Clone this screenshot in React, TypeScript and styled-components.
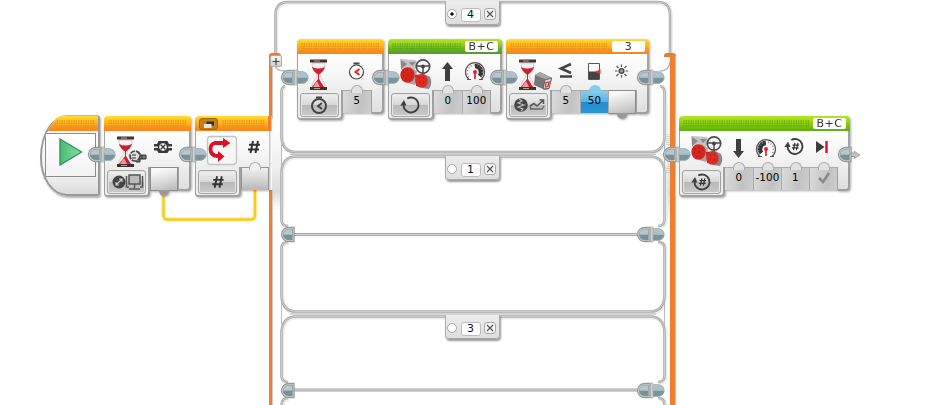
import React from "react";
import styled, { createGlobalStyle, css } from "styled-components";

const GlobalStyle = createGlobalStyle`
  * { box-sizing: border-box; }
  body { margin: 0; background: #fff; overflow: hidden; font-family: "DejaVu Sans", Verdana, sans-serif; }
  svg { display: block; overflow: visible; }
`;

type Tone = "orange" | "green" | "lime";
const tones: Record<Tone, string> = {
  orange: "linear-gradient(#ffdf3c 0, #ffc91f 20%, #fdac20 55%, #fa8f22 75%, #f98718)",
  green: "linear-gradient(#b4e42a 0, #9ad41c 30%, #6cb31c 65%, #4c9c34)",
  lime: "linear-gradient(#b4e42a 0, #a4d812 30%, #7cc40c 65%, #5cae14)",
};

const Canvas = styled.main`
  position: relative;
  width: 951px;
  height: 405px;
  overflow: hidden;
  background: #fff;
`;
const Place = styled.div<{ $x: number; $y: number }>`
  position: absolute;
  left: ${(p) => p.$x}px;
  top: ${(p) => p.$y}px;
`;
const Sequence = styled.div`
  display: flex;
  align-items: flex-start;
  gap: 4px;
`;
const Wires = styled.svg`
  position: absolute;
  inset: 0;
`;
const BlockWrap = styled.div`
  position: relative;
`;
const PortOverlay = styled.div`
  position: absolute;
  left: -17px;
  top: 31px;
`;
const BlockBox = styled.section<{ $w: number }>`
  width: ${(p) => p.$w}px;
  display: flex;
  flex-direction: column;
  filter: drop-shadow(1px 1px 1px rgba(0, 0, 0, 0.32));
`;
const Header = styled.header<{ $tone: Tone; $flush?: boolean }>`
  height: 15px;
  padding: 2px 4px 0;
  display: flex;
  align-items: flex-start;
  gap: 4px;
  border-radius: 4px ${(p) => (p.$flush ? 0 : 4)}px 0 0;
  background: ${(p) => tones[p.$tone]};
`;
const Grip = styled.div<{ $tone: Tone }>`
  flex: 1;
  height: 7px;
  margin-top: 2px;
  background: radial-gradient(circle at 1px 1px, ${(p) => (p.$tone === "orange" ? "#d98a0c" : "#4f9d16")} 0.6px, transparent 0.9px) 0 0 / 2.4px 2.4px;
  opacity: 0.75;
`;
const PortField = styled.div`
  width: 33px;
  height: 11px;
  margin-right: 0;
  border-radius: 2px;
  background: #fff;
  color: #333;
  font-size: 11px;
  line-height: 11px;
  letter-spacing: 0.6px;
  text-align: center;
`;
const FolderBadge = styled.div`
  width: 19px;
  height: 12px;
  padding: 2px 3px;
  border-radius: 3px;
  border: 1px solid #a4640a;
  background: #c1811c;
`;
const IconRow = styled.div<{ $flush?: boolean }>`
  height: 36px;
  display: flex;
  border: solid #a4a4a4;
  border-width: 0 ${(p) => (p.$flush ? 0 : 2)}px 0 1px;
  background: linear-gradient(#fff, #f6f6f6 60%, #ededed);
  & > svg:first-child { margin-left: -1px; }
  & > svg { flex: none; }
`;
const BottomRow = styled.div`
  display: flex;
  align-items: flex-start;
  height: 29px;
`;
const Foot = styled.div`
  flex: none;
  width: 46px;
  height: 30px;
  padding: 3px 3px 2px 2px;
  border: solid #a0a0a0;
  border-width: 0 2px 2px 1px;
  border-radius: 0 0 4px 4px;
  background: #ededed;
`;
const ModeButton = styled.button`
  display: flex;
  align-items: center;
  justify-content: center;
  width: 39px;
  height: 24px;
  padding: 0;
  border: 1px solid #a2a2a2;
  border-radius: 3px;
  background: linear-gradient(#f0f0f0, #d8d8d8 48%, #b9b9b9 52%, #cacaca);
  box-shadow: inset 0 0 0 1px #e8e8e8;
`;
const Cell = styled.div<{ $kind?: "blue" | "out" | "in" }>`
  flex: none;
  position: relative;
  width: 28px;
  height: 23px;
  display: flex;
  justify-content: center;
  border-top: 1px solid #aaa;
  font-size: 10.3px;
  line-height: 19px;
  letter-spacing: 0.2px;
  color: #000;
  background: linear-gradient(100deg, #dcdcdc, #c2c2c2 65%, #cfcfcf);
  & + & { border-left: 1px solid #aaa; }
  &::before {
    content: "";
    position: absolute;
    left: 8px;
    top: -6px;
    width: 10px;
    height: 7px;
    border: 1px solid #aaa;
    border-bottom: 0;
    border-radius: 6px 6px 0 0;
    background: #e2e2e2;
  }
  ${(p) => p.$kind === "blue" && css`
    background: linear-gradient(#85cdee, #55b4e4 48%, #238bcb 52%, #2c95d3);
    &::before { background: #83ccee; border-color: #83ccee; }
  `}
  ${(p) => p.$kind === "out" && css`
    height: 24px;
    border: 1px solid #8c8c8c;
    background: linear-gradient(165deg, #f8f8f8 15%, #dcdcdc 55%, #b8b8b8);
    &::before {
      top: 22px;
      left: 8px;
      height: 6px;
      border: 0;
      border-radius: 0 0 5px 5px;
      background: #999;
    }
  `}
  ${(p) => p.$kind === "in" && css`
    border: solid #959595;
    border-width: 1px 1px 0;
    background: linear-gradient(#f0f0f0, #d6d6d6 50%, #b7b7b7);
    &::before { background: #f0f0f0; left: 7px; }
  `}
`;
const Tail = styled.div`
  flex: 1;
  height: 24px;
  border: solid #9f9f9f;
  border-width: 0 2px 2px 1px;
  border-radius: 0 0 4px 2px;
  background: linear-gradient(#ededed, #dedede);
`;
const StartBox = styled.section`
  width: 60px;
  height: 81px;
  margin-top: -1px;
  display: flex;
  flex-direction: column;
  overflow: hidden;
  border: solid #999;
  border-width: 1px 2px 2px;
  border-top-color: #f7b42c;
  border-radius: 27px 3px 3px 27px / 42px 3px 3px 38px;
  background: linear-gradient(#fff, #f4f4f4 70%, #dcdcdc);
  box-shadow: 1px 2px 2px rgba(0, 0, 0, 0.3);
  ${Header} { padding: 2px 3px 0 12px; border-radius: 0; }
`;
const StartFace = styled.div`
  width: 51px;
  height: 44px;
  margin: 2px 2px 0 3px;
  border: 1px solid #8b8b8b;
  background: linear-gradient(#fff, #f2f2f2);
`;
const Tab = styled.div`
  width: 55px;
  height: 24px;
  padding: 0 3px 0 2px;
  display: flex;
  align-items: center;
  justify-content: space-between;
  border: solid #aaa;
  border-width: 0 1px 1px;
  border-radius: 0 0 4px 4px;
  background: linear-gradient(#ececec, #dedede);
  box-shadow: 1px 2px 2px rgba(0, 0, 0, 0.4);
`;
const CaseValue = styled.div`
  width: 20px;
  height: 14px;
  margin-top: 4px;
  border: 1px solid #bbb;
  border-radius: 3px;
  background: #fff;
  color: #111;
  font-size: 11px;
  line-height: 12px;
  text-align: center;
`;
const Radio = styled.div<{ $on?: boolean }>`
  width: 10px;
  height: 10px;
  margin-top: 3px;
  margin-left: -1px;
  border: 1px solid #aaa;
  border-radius: 50%;
  background: ${(p) => (p.$on ? "radial-gradient(circle, #111 1.3px, #fff 2px)" : "#fff")};
`;
const CloseButton = styled.button`
  width: 12px;
  height: 12px;
  margin-top: 3px;
  padding: 2px;
  border: 1px solid #aaa;
  border-radius: 3px;
  background: #f4f4f4;
`;
const Expander = styled.button`
  display: block;
  width: 12px;
  height: 12px;
  padding: 1px;
  border: 1px solid #aaa;
  border-radius: 2px;
  background: linear-gradient(#f8f8f8, #cfcfcf);
`;
const Rail = styled.div<{ $w: number; $h: number }>`
  width: ${(p) => p.$w}px;
  height: ${(p) => p.$h}px;
  background: #ee7f30;
  box-shadow: 1px 0 1px #c6c6c6;
`;
const RailCap = styled.div`
  width: 12px;
  height: 4px;
  border-radius: 3px 3px 0 0;
  background: #ec7a2c;
`;
const Shade = styled.div<{ $w: number; $h: number }>`
  width: ${(p) => p.$w}px;
  height: ${(p) => p.$h}px;
  background: linear-gradient(#fcfcfc, #efefef 45%, #dcdcdc 75%, #fff);
`;

const Plug = () => (
  <>
    <path d="M14 0.5H9A7.5 7 0 0 0 9 14.5H14Z" fill="#f2f2f2" stroke="#999" strokeWidth="1.4" />
    <path d="M12 2H9A6 5.5 0 0 0 3 7.5H12Z" fill="#b7c7ce" />
    <path d="M3 7.5A6 5.5 0 0 0 9 13H12V7.5Z" fill="#75929a" />
    <path d="M12.5 2H9A6 5.5 0 0 0 9 13H12.5Z" fill="none" stroke="#84969d" strokeWidth="0.8" />
  </>
);
const Socket = () => (
  <>
    <path d="M15 0H17V15H15Z" fill="#e8e8e8" stroke="#aaa" strokeWidth=".8" />
    <path d="M17 1.5H21.5A6.5 6 0 0 1 28.5 7.5H17Z" fill="#afc1c8" />
    <path d="M28.5 7.5A6.5 6 0 0 1 21.5 13.5H17V7.5Z" fill="#78949c" />
    <path d="M17 1.5H21.5A6.5 6 0 0 1 21.5 13.5H17Z" fill="none" stroke="#9fafb5" strokeWidth="0.8" />
  </>
);
const Port = ({ single, stub }: { single?: boolean; stub?: boolean }) => (
  <svg width="30" height="15">
    {stub && <path d="M13 6H18L17 4L23 8L17 11.500L18 9.500H13Z" fill="#c4c4c4" stroke="#a4a4a4" />}
    <Plug />
    {!single && <Socket />}
  </svg>
);

const Main = ({ children }: { children: React.ReactNode }) => <svg width="45" height="36">{children}</svg>;
const Slot = ({ children }: { children: React.ReactNode }) => <svg width="28" height="36">{children}</svg>;

const Hourglass = () => (
  <g>
    <path d="M15 9C15 17 20 18 20 21C20 24 15 27 15 33H28C28 27 23 24 23 21C23 18 28 17 28 9Z" fill="#f3f1f1" stroke="#c9c2c2" strokeWidth=".8" />
    <path d="M15 13Q21 16 28 13Q27 17 22 20.5V25L27 33H15L21 25V20.5Q16 17 15 13Z" fill="#cf1f2c" />
    <path d="M16 33L20 27L23 33Z" fill="#ef9a9e" />
    <rect x="13" y="5.5" width="17" height="3" fill="#45332f" />
    <rect x="13" y="33" width="17" height="3" fill="#3c3330" />
    <path d="M17 7H23M17 34.5H23" stroke="#a9a3a0" />
  </g>
);
const Motors = () => (
  <g>
    <path d="M12 5L28 6L30 13L24 17L13 16Z" fill="#c4c4c4" />
    <path d="M13 6L19 10L13 15ZM21 8L28 8L24 12Z" fill="#8a8a8a" />
    <path d="M22 13L29 17L27 31L20 29Z" fill="#a9a5a4" />
    <path d="M27 21L36 20L40 34L28 32Z" fill="#c9221d" />
    <path d="M36 20L42 23Q45 29 41 35L34 34Z" fill="#8b8786" />
    <ellipse cx="33.500" cy="27" rx="6.300" ry="6.800" fill="#dc2a24" />
    <ellipse cx="19.500" cy="21" rx="7.200" ry="7.700" fill="#d8241e" />
    <path d="M15 18h1M19 16h1M23 19h1M15 22h1M19 21h2M23 23h1M17 26h1M21 26h1M31 24h1M35 24h1M31 28h1M35 29h1" stroke="#8a1713" strokeWidth="1.1" />
    <circle cx="35" cy="12.500" r="6.700" fill="#f5f5f5" stroke="#4c4c4c" strokeWidth="1.700" />
    <path d="M28.500 12H41.500M35 12.500V19" stroke="#4c4c4c" strokeWidth="1.500" />
    <circle cx="35" cy="12.500" r="2" fill="#444" />
  </g>
);
const Stopwatch = ({ x, y, r, hand }: { x: number; y: number; r: number; hand: string }) => (
  <g fill="none" stroke="#454545">
    <circle cx={x} cy={y} r={r} fill={hand === "#444" ? "none" : "#fff"} strokeWidth={hand === "#444" ? 2 : 1.2} />
    <path d={`M${x - 3} ${y - r - 1.5}H${x + 3}`} strokeWidth="2" />
    <path d={`M${x + 3} ${y - 3}L${x - 1} ${y}L${x + 3} ${y + 3}`} stroke={hand} strokeWidth="2" />
  </g>
);
const Arrow = ({ down }: { down?: boolean }) => (
  <path transform={down ? "rotate(180 14.500 17.500)" : undefined} d="M14.500 8L20 15H17V27H12V15H9Z" fill="#3e3e3e" />
);
const Gauge = ({ left }: { left?: boolean }) => (
  <g fill="none">
    <path d="M8 25.500A9.500 9.500 0 1 1 20 25.500" fill="#fafafa" stroke="#555" strokeWidth="1.200" />
    <path d="M14 12A6 6 0 0 1 18.500 22" transform={left ? "matrix(-1 0 0 1 28 0)" : undefined} stroke="#333" strokeWidth="4.500" />
    <path d="M8 23A7.500 7.500 0 1 1 20 23" stroke="#888" strokeWidth="1.500" strokeDasharray="1 2" />
    <path d="M6 25.500H10M18 25.500H22" stroke="#555" />
    <circle cx="14" cy="18" r="2" fill="#e41e2d" />
    <path d="M14 18V25" stroke="#e41e2d" strokeWidth="1.7" />
  </g>
);
const Hash = ({ x, y, s = 1 }: { x: number; y: number; s?: number }) => (
  <path transform={`translate(${x} ${y}) scale(${s})`} d="M-1 -6L-3.500 6M4 -6L1.500 6M-5 -2.200H6M-6 2.400H5" fill="none" stroke="#333" strokeWidth="2" />
);
const Turn = ({ x, y, r = 7.5, hash }: { x: number; y: number; r?: number; hash?: boolean }) => (
  <g transform={`translate(${x} ${y})`}>
    <path d={`M${-r * 0.5} ${-r * 0.866}A${r} ${r} 0 1 1 ${-r} 0`} fill="none" stroke="#404040" strokeWidth="1.9" />
    <path d={`M${-r - 3.2} 0.500L${-r + 0.5} -5L${-r + 3} 0.500Z`} fill="#404040" />
    {hash && <Hash x={0.5} y={0} s={0.6} />}
  </g>
);
const CompareMode = () => (
  <svg width="37" height="22">
    <circle cx="11" cy="11" r="6.8" fill="#454545" />
    <path d="M9 5L12 7L8 9L14 11L8 13L13 15L11 17" fill="none" stroke="#bbb" strokeWidth="1.2" />
    <path d="M20 12L24 9.500L27 12L33 6.500M29.500 6H33.500V10" fill="none" stroke="#555" strokeWidth="1.600" />
    <path d="M20 15H32L34 12M20 12L21 15" fill="none" stroke="#666" strokeWidth="1.300" />
  </svg>
);

interface BlockProps {
  w: number; tone: Tone; port?: string; flush?: boolean; folder?: boolean;
  icons: React.ReactNode; mode: React.ReactNode; cells: React.ReactNode; tail?: boolean;
}
const Block = ({ w, tone, port, flush, folder, icons, mode, cells, tail = true }: BlockProps) => (
  <BlockWrap>
    <BlockBox $w={w}>
      <Header $tone={tone} $flush={flush}>
        {folder && (
          <FolderBadge>
            <svg width="12" height="8"><path d="M3.500 .5H11V4.500H3.500Z" fill="#333" /><path d="M1 3H8.500V7H1Z" fill="#e4e4e4" /></svg>
          </FolderBadge>
        )}
        <Grip $tone={tone} />
        {port && <PortField>{port}</PortField>}
      </Header>
      <IconRow $flush={flush}>{icons}</IconRow>
      <BottomRow>
        <Foot><ModeButton>{mode}</ModeButton></Foot>
        {cells}
        {tail && <Tail />}
      </BottomRow>
    </BlockBox>
    <PortOverlay><Port /></PortOverlay>
  </BlockWrap>
);

const CaseTab = ({ value, on }: { value: string; on?: boolean }) => (
  <Tab>
    <Radio $on={on} />
    <CaseValue>{value}</CaseValue>
    <CloseButton><svg width="6" height="6"><path d="M0 0L6 6M6 0L0 6" stroke="#555" strokeWidth="1.2" /></svg></CloseButton>
  </Tab>
);

const framePaths = [
  "M275.5 54V15Q275.5 2 288 2H658Q670 2 670 15V54",
  "M285 86Q281.5 87 281.5 92V138Q283 152 296 152H650Q663 152 664.500 138V92Q664.500 87 660 86",
  "M288 226Q281.5 226 281.5 220V171Q283 156.500 296 156.500H650Q663 156.500 664.500 171V220Q664.500 226 658 226",
  "M288 242Q281.5 242 281.5 248V297Q283 311.500 296 311.500H650Q663 311.500 664.500 297V248Q664.500 242 658 242",
  "M288 382Q281.5 382 281.5 376V331Q283 316.500 296 316.500H650Q663 316.500 664.500 331V376Q664.500 382 658 382",
  "M288 398Q281.5 398 281.5 405M658 398Q664.500 398 664.500 405",
];

export default function App() {
  return (
    <>
      <GlobalStyle />
      <Canvas>
        <Place $x={272} $y={131}><Shade $w={9} $h={80} /></Place>
        <Place $x={665} $y={110}><Shade $w={5} $h={110} /></Place>
        <Wires width="951" height="405" fill="none">
          {framePaths.map((d) => <path key={d} d={d} stroke="#ededed" strokeWidth="4" transform="translate(1 1)" />)}
          {framePaths.map((d) => <path key={d} d={d} stroke="#a9a9a9" strokeWidth="2.500" />)}
          {framePaths.map((d) => <path key={d} d={d} stroke="#d6d6d6" strokeWidth="0.800" />)}
          <path d="M275.500 66Q276 71 285 71M670 62Q669 71 660 71" stroke="#b4b4b4" strokeWidth="1.500" />
          <path d="M290 154.250H656M290 314H656" stroke="#b6b6b6" />
          <path d="M281.500 143V166M664.500 143V166M281.500 302V325M664.500 302V325" stroke="#b8b8b8" />
          <path d="M293 234.500H637M293 390H637" stroke="#a4a4a4" strokeWidth="3" />
          <path d="M293 234.500H637M293 390H637" stroke="#ddd" />
          <path d="M667 136V145M669 134V146M667 166V173M669 164V174" stroke="#b6b6b6" strokeDasharray="1 1" />
          <path d="M163.500 191V215Q163.500 219.500 167 219.500H251Q255 219.500 255 215V188" stroke="#fff0b5" strokeWidth="4.500" />
          <path d="M163.500 191V215Q163.500 219.500 167 219.500H251Q255 219.500 255 215V188" stroke="#fdc916" strokeWidth="2.400" />
        </Wires>

        <Place $x={269} $y={53}>
          <RailCap />
          <Rail $w={3} $h={62} />
        </Place>
        <Place $x={269} $y={190}><Rail $w={3} $h={215} /></Place>
        <Place $x={269.5} $y={55}>
          <Expander><svg width="8" height="8"><path d="M4 1V8M.5 4.500H7.500" stroke="#444" strokeWidth="1.2" /></svg></Expander>
        </Place>
        <Place $x={664} $y={53}><RailCap /></Place>
        <Place $x={670} $y={56}><Rail $w={5} $h={350} /></Place>

        <Place $x={445} $y={1}><CaseTab value="4" on /></Place>
        <Place $x={445} $y={156}><CaseTab value="1" /></Place>
        <Place $x={445} $y={315}><CaseTab value="3" /></Place>

        <Place $x={40} $y={116}>
          <Sequence>
            <StartBox>
              <Header $tone="orange"><Grip $tone="orange" /></Header>
              <StartFace>
                <svg width="49" height="42">
                  <defs><linearGradient id="play"><stop stopColor="#43bd72" /><stop offset="1" stopColor="#8ae0a6" /></linearGradient></defs>
                  <path d="M14 5L35.500 18L14 31Z" fill="url(#play)" stroke="#36935a" strokeWidth="1.4" />
                </svg>
              </StartFace>
            </StartBox>
            <Block w={87} tone="orange"
              icons={<>
                <Main>
                  <Hourglass />
                  <path d="M32 22H36V24H42V28H36V31H32Z" fill="#777" stroke="#333" />
                  <circle cx="31" cy="25" r="5" fill="#ddd" stroke="#444" strokeWidth="1.700" strokeDasharray="5 1" />
                  <path d="M28 24H32M28 27H32M38 24V28" stroke="#333" />
                </Main>
                <Slot>
                  <path d="M9.500 10H18.500L20 13H23V15.500H5V13H8ZM9.500 22H18.500L20 19.500H23V17H5V19.500H8Z" fill="#3b3b3b" />
                  <circle cx="14" cy="16" r="4.500" fill="#fff" stroke="#333" strokeWidth="1.5" />
                  <path d="M11.500 13.500L16.500 18.500M16.500 13.500L11.500 18.500" stroke="#444" strokeWidth="1.5" />
                </Slot>
              </>}
              mode={<svg width="37" height="22">
                <circle cx="11" cy="11" r="6.500" fill="#444" />
                <path d="M8.500 13.500L13.500 8.500M11 8H14V11M8 11V14H11" fill="none" stroke="#ccc" strokeWidth="1.2" />
                <rect x="21" y="4" width="11" height="9" fill="#bbb" stroke="#555" strokeWidth="1.5" />
                <path d="M26.500 13V17M21 18H32M18.500 5V16H21M34.500 5V16H32" fill="none" stroke="#555" strokeWidth="1.5" />
              </svg>}
              cells={<Cell $kind="out" />} />
            <Block w={74} tone="orange" flush folder tail={false}
              icons={<>
                <Main>
                  <rect x="12.500" y="5.500" width="29" height="28" rx="3" fill="#f6f6f6" stroke="#c3c3c3" strokeWidth="1.3" />
                  <path d="M30 12H20Q15.500 13 15.500 18Q15.500 25 23 25H25" fill="none" stroke="#db1023" strokeWidth="3.800" />
                  <path d="M28 7L35.500 12L28 17ZM23 20L29.500 25.500L23 31Z" fill="#db1023" />
                </Main>
                <Slot><Hash x={14} y={16} /></Slot>
              </>}
              mode={<svg width="37" height="22"><Hash x={19} y={11} s={0.95} /></svg>}
              cells={<Cell $kind="in" />} />
          </Sequence>
        </Place>
        <Place $x={268} $y={116}><Rail $w={3} $h={15} /></Place>

        <Place $x={297} $y={39}>
          <Sequence>
            <Block w={87} tone="orange"
              icons={<><Main><Hourglass /></Main><Slot><Stopwatch x={14.5} y={18} r={7} hand="#e22" /></Slot></>}
              mode={<svg width="37" height="22"><Stopwatch x={18} y={12} r={7} hand="#444" /></svg>}
              cells={<Cell>5</Cell>} />
            <Block w={114} tone="green" port="B+C"
              icons={<><Main><Motors /></Main><Slot><Arrow /></Slot><Slot><Gauge /></Slot></>}
              mode={<svg width="37" height="22"><Turn x={19} y={11} /></svg>}
              cells={<><Cell>0</Cell><Cell>100</Cell></>} />
            <Block w={143} tone="orange" port="3"
              icons={<>
                <Main>
                  <Hourglass />
                  <path d="M29 21L34 18L46 24L43 35L39 36L28 31Z" fill="#777" />
                  <path d="M29 21L34 18L46 24L41 26Z" fill="#a5a5a5" />
                  <path d="M39 26L45.500 24L43 34.500L37 35Z" fill="#ddd" stroke="#666" />
                  <path d="M40 28.500L43 28L42 32.500L39.500 33Z" fill="none" stroke="#c33" strokeWidth="1.2" />
                </Main>
                <Slot><path d="M20 10L10 14.500L20 19M9 22.500H21" fill="none" stroke="#444" strokeWidth="2.600" /></Slot>
                <Slot>
                  <path d="M9.500 9.500H20.500V25.500H9.500Z" fill="#fafafa" stroke="#555" />
                  <path d="M10 17.500H20V25H10Z" fill="#444" /><path d="M16 18L21.500 15V20Z" fill="#e32" />
                </Slot>
                <Slot>
                  <circle cx="14.500" cy="17" r="2.400" fill="#999" stroke="#444" strokeWidth="1.3" />
                  <path d="M14.500 10.500V13M14.500 21V23.500M8 17H10.500M18.500 17H21M9.500 12L11.500 14M17.500 20L19.500 22M19.500 12L17.500 14M11.500 20L9.500 22" stroke="#555" strokeWidth="1.2" />
                </Slot>
              </>}
              mode={<CompareMode />}
              cells={<><Cell>5</Cell><Cell $kind="blue">50</Cell><Cell $kind="out" /></>} />
          </Sequence>
        </Place>
        <Place $x={679} $y={116}>
          <Block w={171} tone="lime" port="B+C"
            icons={<>
              <Main><Motors /></Main><Slot><Arrow down /></Slot><Slot><Gauge left /></Slot>
              <Slot><Turn x={15} y={15.5} hash /></Slot>
              <Slot><path d="M8 10L16.500 16L8 22Z" fill="#3c3c3c" /><path d="M18.500 10V22" stroke="#db1630" strokeWidth="2.500" /></Slot>
            </>}
            mode={<svg width="37" height="22"><Turn x={19} y={11} hash /></svg>}
            cells={<>
              <Cell>0</Cell><Cell>-100</Cell><Cell>1</Cell>
              <Cell><svg width="14" height="20"><path d="M2 10L6 14L12 5" fill="none" stroke="#888" strokeWidth="2.500" /></svg></Cell>
            </>} />
        </Place>

        <Place $x={636} $y={70}><Port /></Place>
        <Place $x={837} $y={147}><Port single stub /></Place>
        {[227, 383].map((y) => (
          <React.Fragment key={y}>
            <Place $x={280} $y={y}><Port single /></Place>
            <Place $x={636} $y={y}><Port /></Place>
          </React.Fragment>
        ))}
      </Canvas>
    </>
  );
}
